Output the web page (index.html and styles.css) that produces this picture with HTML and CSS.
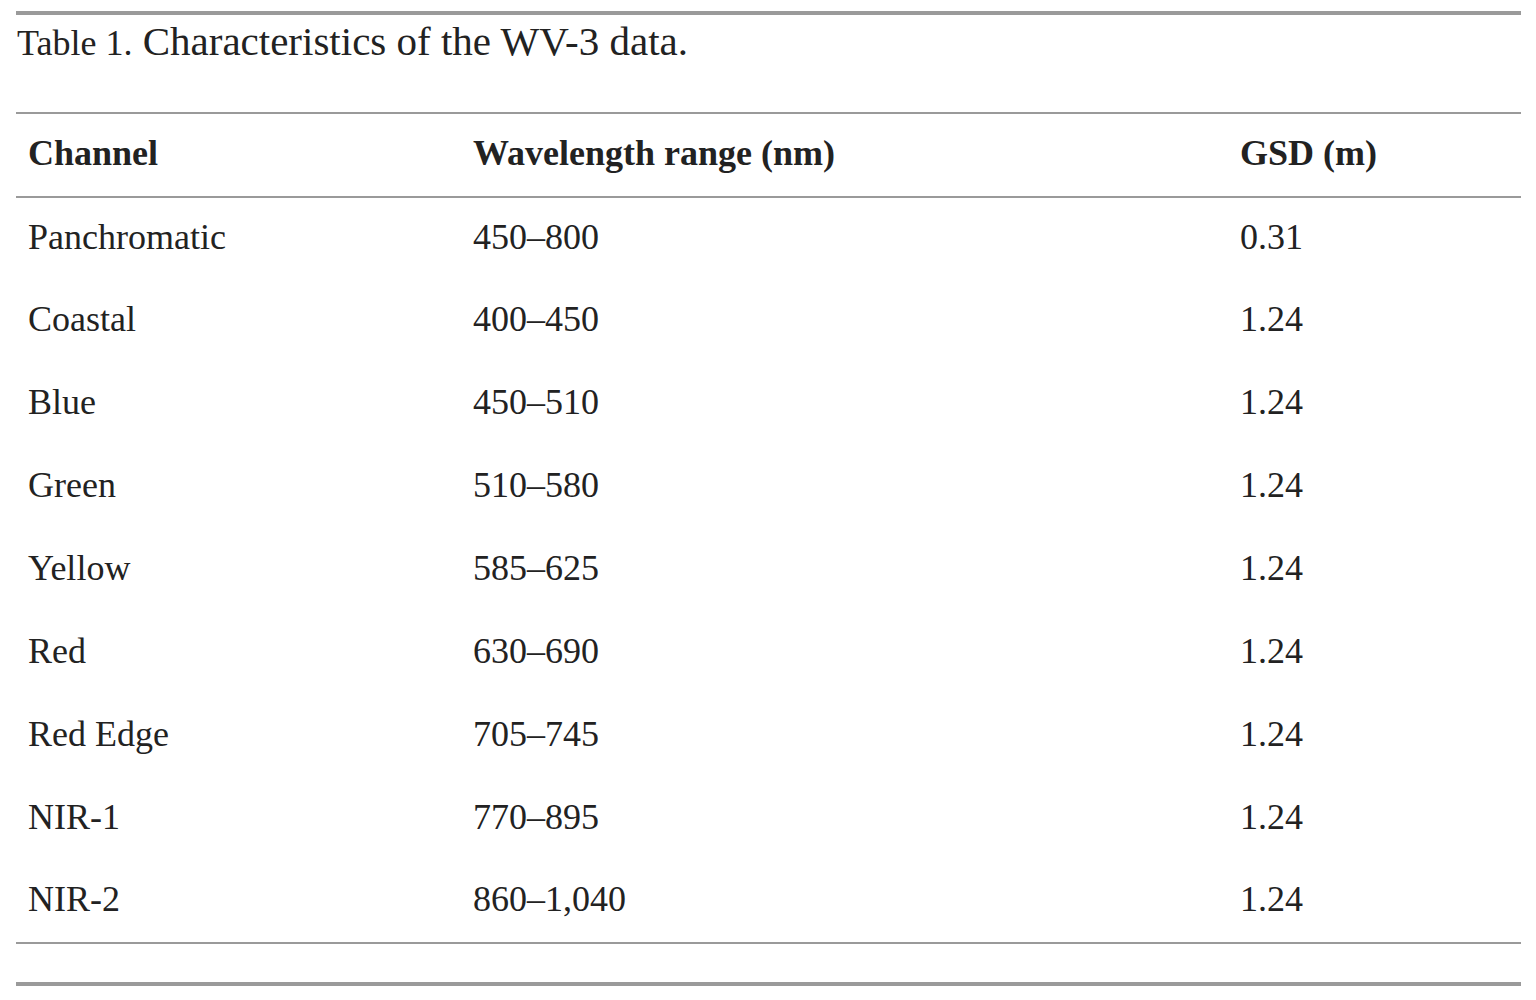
FILE: index.html
```html
<!DOCTYPE html>
<html>
<head>
<meta charset="utf-8">
<link rel="stylesheet" href="styles.css">
</head>
<body>
<div class="page">
  <div class="rule-thick rule-top"></div>
  <div class="caption"><span class="label">Table 1.</span> Characteristics of the WV-3 data.</div>
  <table class="data">
    <thead>
      <tr><th class="c1">Channel</th><th class="c2">Wavelength range (nm)</th><th class="c3">GSD (m)</th></tr>
    </thead>
    <tbody>
      <tr><td>Panchromatic</td><td>450–800</td><td>0.31</td></tr>
      <tr><td>Coastal</td><td>400–450</td><td>1.24</td></tr>
      <tr><td>Blue</td><td>450–510</td><td>1.24</td></tr>
      <tr><td>Green</td><td>510–580</td><td>1.24</td></tr>
      <tr><td>Yellow</td><td>585–625</td><td>1.24</td></tr>
      <tr><td>Red</td><td>630–690</td><td>1.24</td></tr>
      <tr><td>Red Edge</td><td>705–745</td><td>1.24</td></tr>
      <tr><td>NIR-1</td><td>770–895</td><td>1.24</td></tr>
      <tr><td>NIR-2</td><td>860–1,040</td><td>1.24</td></tr>
    </tbody>
  </table>
  <div class="rule-thick rule-bottom"></div>
</div>
</body>
</html>
```

FILE: styles.css
```css
html, body {
  margin: 0;
  padding: 0;
  background: #ffffff;
}
body {
  font-family: "Liberation Serif", "Times New Roman", serif;
  color: #222222;
}
.page {
  width: 1505px;
  margin-left: 16px;
}
.rule-thick {
  height: 4px;
  background: #9a9a9a;
}
.rule-top {
  margin-top: 11px;
}
.caption {
  font-size: 41px;
  line-height: 48px;
  padding-top: 2px;
  padding-bottom: 45px;
  padding-left: 1px;
  white-space: nowrap;
}
.caption .label {
  font-size: 36px;
}
.data {
  width: 1505px;
  border-collapse: collapse;
  table-layout: fixed;
  font-size: 36px;
}
.data th, .data td {
  padding: 0 0 4px 12px;
  text-align: left;
  vertical-align: middle;
  white-space: nowrap;
}
.data thead tr {
  border-top: 2px solid #9a9a9a;
  border-bottom: 2px solid #9a9a9a;
}
.data th {
  font-weight: bold;
  height: 78px;
}
.data .c1 { width: 433px; }
.data .c2 { width: 755px; }
.data .c3 { width: 281px; }
.data tbody tr {
  height: 82.9px;
}
.data tbody tr:last-child {
  border-bottom: 2px solid #9a9a9a;
}
.rule-bottom {
  margin-top: 38px;
}
```
